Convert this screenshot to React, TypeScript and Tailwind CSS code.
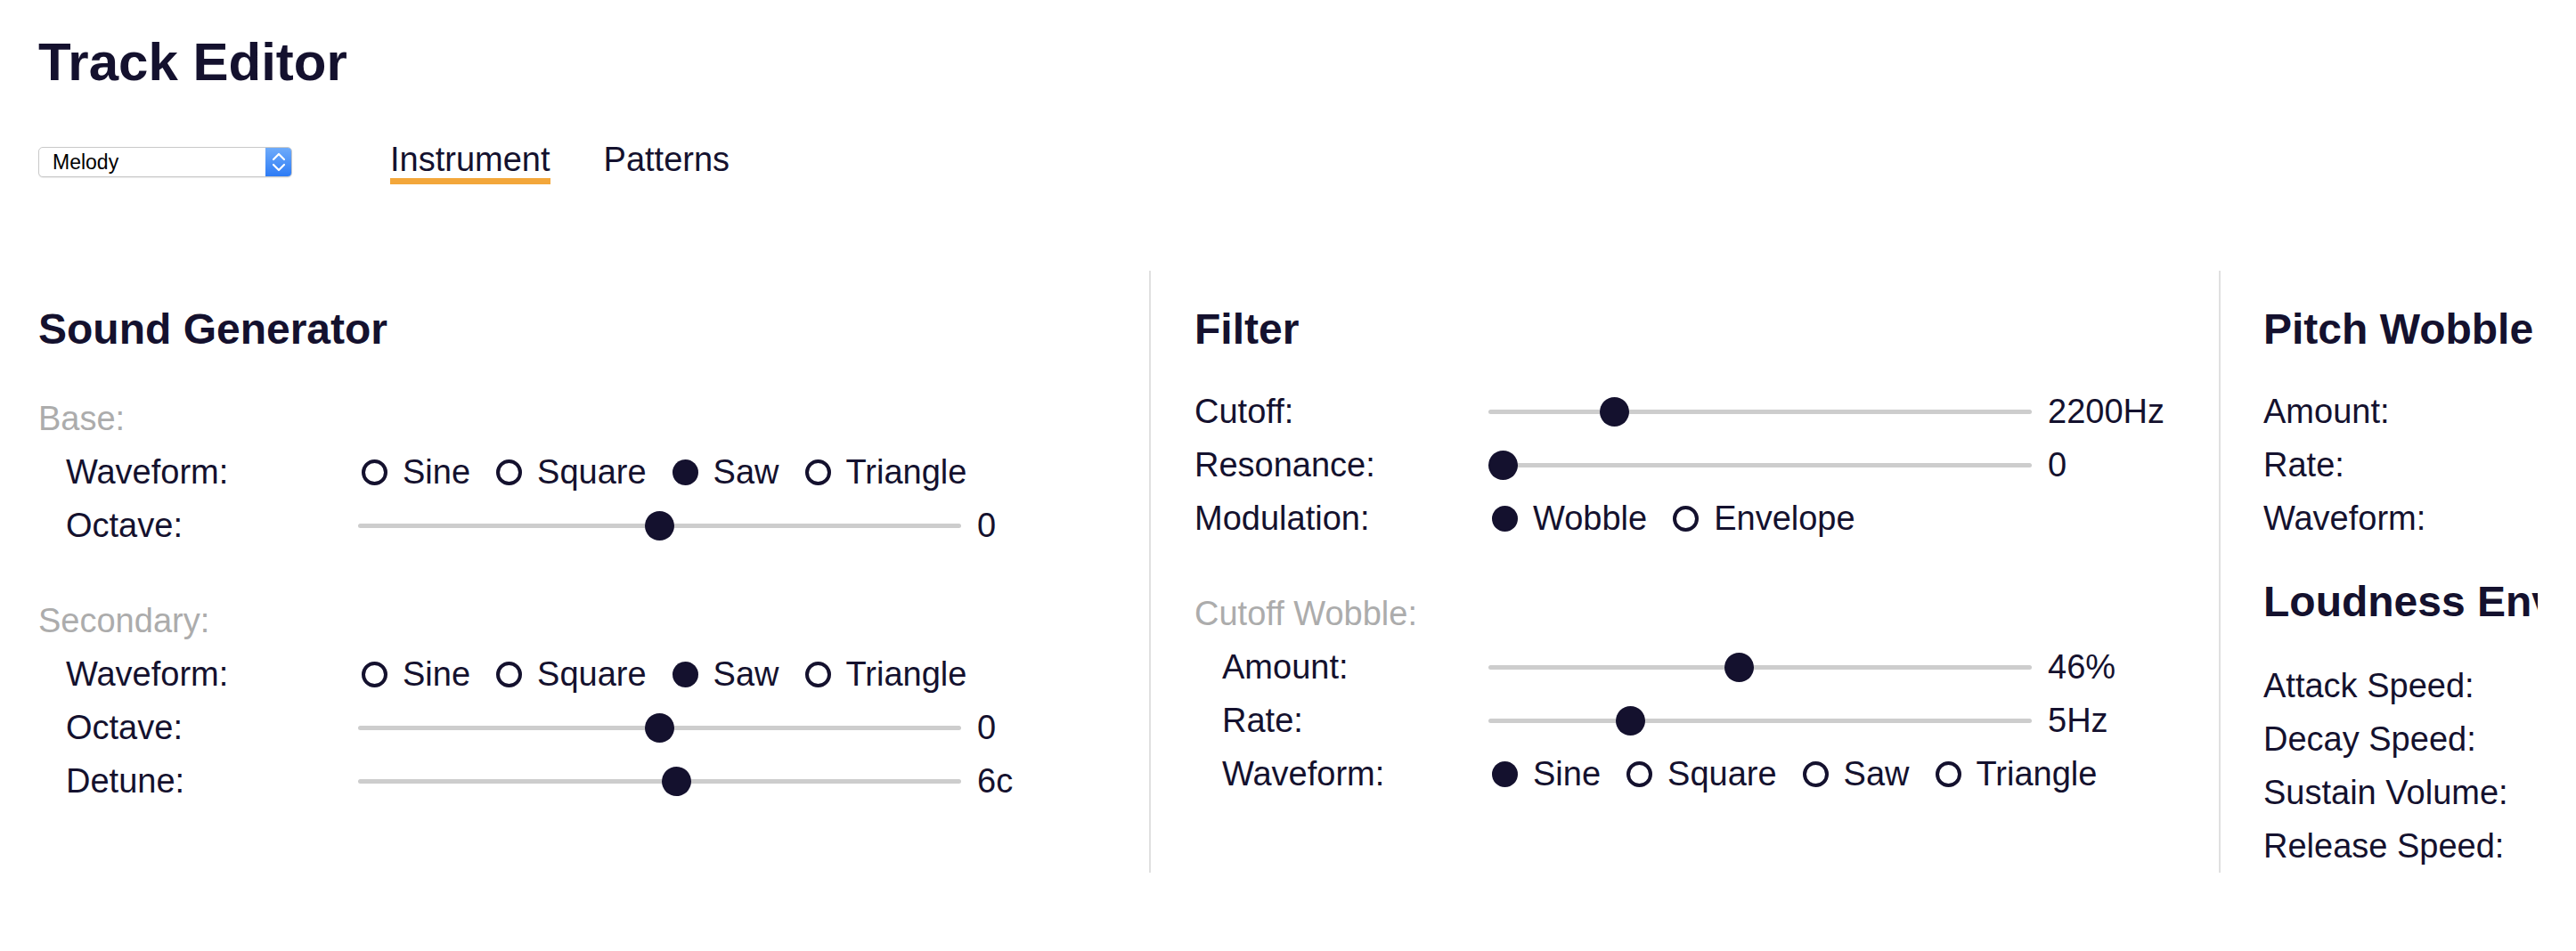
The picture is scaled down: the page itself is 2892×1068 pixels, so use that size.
import React from "react";

const FONT = "font-['Liberation_Sans',Arial,sans-serif]";

function Slider({ frac, width }: { frac: number; width: number }) {
  const left = Math.round(frac * (width - 33));
  return (
    <div className="relative flex h-[33px] shrink-0 items-center" style={{ width }}>
      <div className="h-[5px] w-full rounded-full bg-[#cdcdcd]" />
      <div
        className="absolute top-0 h-[33px] w-[33px] rounded-full bg-[#14112e]"
        style={{ left }}
      />
    </div>
  );
}

function Radios({ options, selected }: { options: string[]; selected: number }) {
  return (
    <div className="ml-[4px] flex items-center">
      {options.map((o, i) => (
        <div key={o} className="mr-[29px] flex items-center">
          {i === selected ? (
            <span className="block h-[29px] w-[29px] rounded-full bg-[#14112e]" />
          ) : (
            <span className="block h-[29px] w-[29px] rounded-full border-4 border-[#14112e]" />
          )}
          <span className="ml-[17px]">{o}</span>
        </div>
      ))}
    </div>
  );
}

type RowProps = {
  label: string;
  labelW: number;
  indent?: boolean;
  children?: React.ReactNode;
};

function Row({ label, labelW, indent, children }: RowProps) {
  return (
    <div className="flex h-[60px] items-center leading-[60px] whitespace-nowrap">
      <div className={`shrink-0 ${indent ? "pl-[31px]" : ""}`} style={{ width: labelW }}>
        {label}
      </div>
      {children}
    </div>
  );
}

function SliderRow({
  label,
  labelW,
  indent,
  frac,
  width,
  value,
}: {
  label: string;
  labelW: number;
  indent?: boolean;
  frac: number;
  width: number;
  value: string;
}) {
  return (
    <Row label={label} labelW={labelW} indent={indent}>
      <Slider frac={frac} width={width} />
      <span className="ml-[18px]">{value}</span>
    </Row>
  );
}

function GroupLabel({ children }: { children: React.ReactNode }) {
  return <div className="h-[60px] leading-[60px] text-[#acacac]">{children}</div>;
}

function H2({ children }: { children: React.ReactNode }) {
  return <h2 className="text-[48px] font-bold leading-[48px] whitespace-nowrap">{children}</h2>;
}

const WAVES = ["Sine", "Square", "Saw", "Triangle"];

export default function App() {
  return (
    <div className={`min-h-[1068px] w-full bg-white px-[43px] pt-[40px] text-[#14112e] ${FONT}`}>
      <h1 className="text-[60px] font-bold leading-[60px]">Track Editor</h1>

      <div className="mt-[60px] flex items-start">
        <div className="mt-[5px] flex h-[34px] w-[285px] overflow-hidden rounded-[5px] border border-[#c9c9c9] bg-white shadow-[0_1px_1px_rgba(0,0,0,0.08)]">
          <div className="flex flex-1 items-center pl-[15px] text-[23px] text-black">Melody</div>
          <div className="flex w-[29px] items-center justify-center bg-gradient-to-b from-[#6eabfa] to-[#2c7bf5]">
            <svg width="29" height="32" viewBox="0 0 29 32" fill="none">
              <polyline points="9,13 15,7 21,13" stroke="white" strokeWidth="2.2" strokeLinecap="round" strokeLinejoin="round" />
              <polyline points="9,19 15,25 21,19" stroke="white" strokeWidth="2.2" strokeLinecap="round" strokeLinejoin="round" />
            </svg>
          </div>
        </div>
        <div className="ml-[110px] flex flex-col">
          <span className="text-[38px] leading-[38px]">Instrument</span>
          <div className="mt-[2px] h-[7px] bg-[#f3a73b]" />
        </div>
        <div className="ml-[60px] flex flex-col">
          <span className="text-[38px] leading-[38px]">Patterns</span>
        </div>
      </div>

      <div className="mt-[97px] flex overflow-hidden text-[38px]">
        {/* Sound Generator */}
        <div className="w-[1247px] shrink-0 pt-[42px]">
          <H2>Sound Generator</H2>
          <div className="mt-[46px]">
            <GroupLabel>Base:</GroupLabel>
            <Row label="Waveform:" labelW={359} indent>
              <Radios options={WAVES} selected={2} />
            </Row>
            <SliderRow label="Octave:" labelW={359} indent frac={0.5} width={677} value="0" />
          </div>
          <div className="mt-[47px]">
            <GroupLabel>Secondary:</GroupLabel>
            <Row label="Waveform:" labelW={359} indent>
              <Radios options={WAVES} selected={2} />
            </Row>
            <SliderRow label="Octave:" labelW={359} indent frac={0.5} width={677} value="0" />
            <SliderRow label="Detune:" labelW={359} indent frac={0.53} width={677} value="6c" />
          </div>
        </div>

        {/* Filter */}
        <div className="w-[1201px] shrink-0 border-l-2 border-[#e0e0e0] pl-[49px] pt-[42px]">
          <H2>Filter</H2>
          <div className="mt-[38px]">
            <SliderRow label="Cutoff:" labelW={330} frac={0.2175} width={610} value="2200Hz" />
            <SliderRow label="Resonance:" labelW={330} frac={0} width={610} value="0" />
            <Row label="Modulation:" labelW={330}>
              <Radios options={["Wobble", "Envelope"]} selected={0} />
            </Row>
          </div>
          <div className="mt-[47px]">
            <GroupLabel>Cutoff Wobble:</GroupLabel>
            <SliderRow label="Amount:" labelW={330} indent frac={0.46} width={610} value="46%" />
            <SliderRow label="Rate:" labelW={330} indent frac={0.247} width={610} value="5Hz" />
            <Row label="Waveform:" labelW={330} indent>
              <Radios options={WAVES} selected={0} />
            </Row>
          </div>
        </div>

        {/* Pitch Wobble / Loudness */}
        <div className="w-[1200px] shrink-0 border-l-2 border-[#e0e0e0] pl-[48px] pt-[42px]">
          <H2>Pitch Wobble</H2>
          <div className="mt-[38px]">
            <SliderRow label="Amount:" labelW={340} frac={0} width={610} value="0c" />
            <SliderRow label="Rate:" labelW={340} frac={0.25} width={610} value="5Hz" />
            <Row label="Waveform:" labelW={340}>
              <Radios options={WAVES} selected={0} />
            </Row>
          </div>
          <div className="mt-[40px]">
            <H2>Loudness Envelope</H2>
          </div>
          <div className="mt-[40px]">
            <SliderRow label="Attack Speed:" labelW={340} frac={0.1} width={610} value="10ms" />
            <SliderRow label="Decay Speed:" labelW={340} frac={0.3} width={610} value="300ms" />
            <SliderRow label="Sustain Volume:" labelW={340} frac={0.8} width={610} value="80%" />
            <SliderRow label="Release Speed:" labelW={340} frac={0.2} width={610} value="200ms" />
          </div>
        </div>
      </div>
    </div>
  );
}
